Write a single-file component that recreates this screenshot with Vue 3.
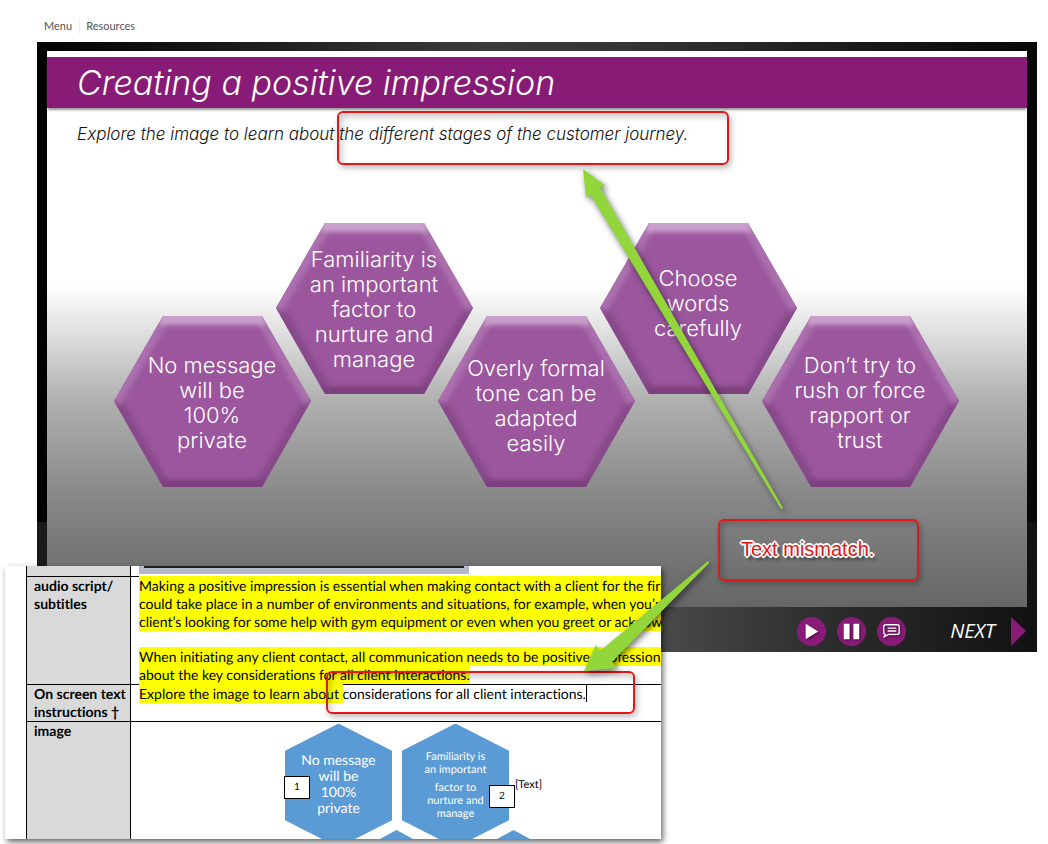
<script setup>
const hexes = [
  { lines: ['No message', 'will be', '100%', 'private'], low: true },
  { lines: ['Familiarity is', 'an important', 'factor to', 'nurture and', 'manage'], low: false },
  { lines: ['Overly formal', 'tone can be', 'adapted', 'easily'], low: true, lowered: true },
  { lines: ['Choose', 'words', 'carefully'], low: false, raised: true },
  { lines: ['Don’t try to', 'rush or force', 'rapport or', 'trust'], low: true },
]
</script>

<template>
  <div class="page">
    <nav class="topnav">
      <a href="#menu">Menu</a>
      <a href="#resources">Resources</a>
    </nav>

    <main class="player">
      <section class="slide">
        <h1>Creating a positive impression</h1>
        <p class="lead">Explore the image to learn about the different stages of the customer journey.</p>
        <div class="hexrow">
          <div v-for="(h, i) in hexes" :key="i" class="hex" :class="{ low: h.low, raised: h.raised, lowered: h.lowered }">
            <svg viewBox="0 0 197 171" aria-hidden="true">
              <defs>
                <clipPath :id="'hc' + i"><polygon points="0,85 49,0 148,0 197,85 148,171 49,171" /></clipPath>
                <filter :id="'hb' + i"><feGaussianBlur stdDeviation="2.5" /></filter>
              </defs>
              <g :clip-path="`url(#hc${i})`">
                <rect width="197" height="171" fill="#9b569d" />
                <g :filter="`url(#hb${i})`" stroke-width="15" fill="none">
                  <path d="M49 171L0 85M148 171L197 85" stroke="#874a8a" />
                  <path d="M0 85L49 0M148 0L197 85" stroke="#ab70ae" />
                  <path d="M44 171H153" stroke="#7b417e" />
                  <path d="M46 -1H151" stroke="#c9a0cc" stroke-width="20" />
                </g>
              </g>
            </svg>
            <p><span v-for="l in h.lines" :key="l">{{ l }}</span></p>
          </div>
        </div>
      </section>
      <footer class="controls">
        <button class="round" aria-label="Play">
          <svg viewBox="0 0 30 30"><path d="M9 7L22 15L9 23Z" fill="#fff" /></svg>
        </button>
        <button class="round" aria-label="Pause">
          <svg viewBox="0 0 30 30"><path d="M7 7H13V23H7ZM17 7H23V23H17Z" fill="#fff" /></svg>
        </button>
        <button class="round" aria-label="Captions">
          <svg viewBox="0 0 30 30" fill="none" stroke="#fff" stroke-width="1.4">
            <path d="M9 8H21Q23 8 23 10V16Q23 18 21 18H12L7.500 20.500L8.500 18Q7 17.500 7 16V10Q7 8 9 8ZM11 11.500H20M11 14.500H20" />
          </svg>
        </button>
        <button class="next">
          NEXT
          <svg viewBox="0 0 15 30"><path d="M0 1L15 15L0 30Z" fill="#871b76" /></svg>
        </button>
      </footer>
    </main>

    <section class="doc">
      <table>
        <tbody>
          <tr class="stub">
            <th></th>
            <td><div class="strip"></div></td>
          </tr>
          <tr class="script">
            <th scope="row">audio script/<br />subtitles</th>
            <td>
              <p>
                <mark>Making a positive impression is essential when making contact with a client for the first</mark><br />
                <mark>could take place in a number of environments and situations, for example, when you’re</mark><br />
                <mark>client’s looking for some help with gym equipment or even when you greet or acknowle</mark>
              </p>
              <p>
                <mark>When initiating any client contact, all communication needs to be positive, professional</mark><br />
                <mark>about the key considerations for all client interactions.</mark>
              </p>
            </td>
          </tr>
          <tr class="instr">
            <th scope="row">On screen text<br />instructions †</th>
            <td><mark>Explore the image to learn about </mark><span class="caret">considerations for all client interactions.</span></td>
          </tr>
          <tr class="image">
            <th scope="row">image</th>
            <td>
              <div class="figure">
                <div class="blue first">
                  <p>No message<br />will be<br />100%<br />private</p>
                  <b class="tag left">1</b>
                </div>
                <div class="blue second">
                  <p>Familiarity is<br />an important</p>
                  <p>factor to<br />nurture and<br />manage</p>
                  <b class="tag right">2</b>
                </div>
                <span class="ph">[Text]</span>
                <svg class="tips" viewBox="0 0 160 10" aria-hidden="true">
                  <path d="M0 10L18.500 0L37 10ZM117 10L135.500 0L154 10Z" fill="#5b9bd5" />
                </svg>
              </div>
            </td>
          </tr>
        </tbody>
      </table>
    </section>

    <div class="box one"></div>
    <div class="box two"></div>
    <div class="box three"><strong>Text mismatch.</strong></div>
    <svg class="arrows" viewBox="0 0 1048 844" aria-hidden="true">
      <path d="M583 169L606 186L600 187L783 508L781 509L590 194L586 198Z" />
      <path d="M584 671L596 645L600 651L708 561L709 563L612 662L618 668Z" />
    </svg>
  </div>
</template>

<style>
body { margin: 0; background: #fff; }
</style>

<style scoped>
* { box-sizing: border-box; }
h1, p { margin: 0; }
.page {
  position: relative;
  min-height: 844px;
  overflow: hidden;
  font-family: Lato, "Open Sans", sans-serif;
  font-variant-ligatures: none;
}
.topnav {
  display: flex;
  height: 42px;
  padding: 18px 0 0 44px;
  font-size: 11px;
  line-height: 16px;
}
.topnav a { height: 16px; color: #555; text-decoration: none; }
.topnav a + a { margin-left: 7px; padding-left: 6px; border-left: 1px solid #eee; }
.player {
  margin: 0 11px 0 37px;
  padding: 9px 10px 0;
  background:
    linear-gradient(90deg, #1a1a1a, #555 45%, #4a4a4a 62%, #2b2b2b 80%, #111) 0 480px / 100% 130px no-repeat,
    linear-gradient(90deg, #000, #3c3c3c 45%, #333 60%, #080808 98%);
}
.slide {
  height: 556px;
  padding-top: 6px;
  background: linear-gradient(#fff 235px, #ddd 285px, #b0b0b0 350px, #868686 450px, #666 556px);
  font-family: Inter, "Open Sans", sans-serif;
}
h1 {
  height: 51px;
  padding-left: 30px;
  background: #871b76;
  box-shadow: 0 3px 2px -1px #999;
  color: #fff;
  font-size: 34px;
  font-style: italic;
  font-weight: 300;
  line-height: 51px;
}
.lead {
  padding: 14px 0 0 30px;
  color: #111;
  font-size: 17px;
  font-style: italic;
  font-weight: 300;
  line-height: 24px;
}
.hexrow { display: flex; justify-content: center; padding: 77px 0 0 33px; }
.hex { position: relative; width: 197px; height: 171px; margin-left: -35px; display: grid; flex: none; }
.hex.low { margin-top: 93px; }
.hex > * { grid-area: 1 / 1; }
.hex svg { width: 197px; height: 171px; }
.hex p {
  position: relative;
  display: flex;
  flex-direction: column;
  align-self: center;
  padding-top: 2px;
  color: #fff;
  font-size: 22px;
  font-weight: 300;
  line-height: 25px;
  text-align: center;
}
.hex.raised p { padding-bottom: 12px; }
.hex.lowered p { padding-top: 8px; }
.controls { display: flex; align-items: center; justify-content: flex-end; gap: 11px; height: 45px; padding: 3px 1px 0 0; }
button { padding: 0; border: 0; background: none; cursor: pointer; }
.round { width: 29px; height: 29px; border-radius: 50%; background: #871b76; }
.round svg { display: block; width: 29px; height: 29px; filter: drop-shadow(1px 1px 1px #400a38); }
.next { display: flex; align-items: center; gap: 16px; margin-left: 33px; color: #fff; font: italic 20px/30px "Open Sans", sans-serif; }
.next svg { width: 15px; height: 30px; }

.doc {
  position: absolute;
  top: 566px;
  left: 5px;
  width: 656px;
  height: 273px;
  padding-left: 21px;
  overflow: hidden;
  background: #fff;
  text-rendering: geometricPrecision;
}
.page::after {
  content: "";
  position: absolute;
  top: 566px;
  left: 5px;
  width: 656px;
  height: 273px;
  box-shadow: 2px 3px 6px #0009;
}
table { width: 800px; border-collapse: collapse; table-layout: fixed; color: #000; font-size: 14px; line-height: 18px; }
th, td { padding: 0 8px; border: 1px solid #000; vertical-align: top; text-align: left; }
th { width: 104px; padding: 0 0 0 7px; background: #d9d9d9; font-weight: 700; white-space: nowrap; }
td { white-space: nowrap; }
mark { padding: 1px 0; background: #ff0; color: inherit; white-space: pre; }
.stub th, .stub td { height: 10px; padding-top: 0; border-top: 0; }
.strip { width: 330px; height: 8px; border: solid #b4bbc7; border-width: 0 5px 6px; background: #222; }
.script td { height: 107px; }
.script p + p { margin-top: 17px; }
.instr th { height: 37px; }
.caret { border-right: 1px solid #000; }
.image th { height: 130px; }
.figure { position: relative; display: flex; gap: 10px; margin-left: 146px; padding-top: 2px; }
.blue { position: relative; display: flex; flex-direction: column; align-items: center; width: 107px; height: 124px; color: #fff; text-align: center; isolation: isolate; }
.blue::before { content: ""; position: absolute; inset: 0; z-index: -1; background: #5b9bd5; clip-path: polygon(50% 0, 100% 22%, 100% 78%, 50% 100%, 0 78%, 0 22%); }
.first { padding-top: 28px; line-height: 16px; }
.second { padding-top: 26px; gap: 5px; font-size: 11px; line-height: 13px; }
.tag { position: absolute; display: grid; place-items: center; width: 26px; height: 23px; border: 1px solid #000; background: #fff; color: #000; font-size: 10px; font-weight: 400; line-height: 12px; }
.tag.left { top: 52px; left: -1px; }
.tag.right { top: 61px; right: -6px; }
.ph { margin-top: 53px; margin-left: -4px; font-size: 11px; line-height: 16px; }
.tips { position: absolute; top: 108px; left: 93px; width: 160px; height: 10px; }

.box { position: absolute; z-index: 2; border: 2px solid #e01818; border-radius: 6px; box-shadow: 2px 3px 6px #0004, inset 3px 4px 6px #0003; }
.one { top: 111px; left: 337px; width: 392px; height: 54px; }
.two { top: 671px; left: 326px; width: 309px; height: 43px; }
.three { top: 519px; left: 718px; width: 201px; height: 62px; padding: 18px 0 0 21px; }
.three strong {
  display: block;
  color: #e81414;
  font: 20px/20px "Liberation Sans", sans-serif;
  text-shadow: 1px 0 #fff, -1px 0 #fff, 0 1px #fff, 0 -1px #fff, 1px 1px #fff, -1px -1px #fff, 1px -1px #fff, -1px 1px #fff, 0 2px #fff, 2px 0 #fff, -2px 0 #fff, 0 -2px #fff, 3px 4px 3px #0009;
}
.arrows { position: absolute; z-index: 3; top: 0; left: 0; width: 1048px; height: 844px; pointer-events: none; fill: #92d63c; filter: drop-shadow(2px 3px 3px #0008); }
</style>
